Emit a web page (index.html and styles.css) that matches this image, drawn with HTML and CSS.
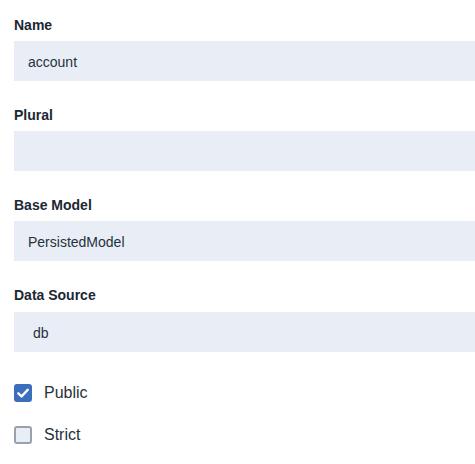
FILE: index.html
```html
<!DOCTYPE html>
<html>
<head>
<meta charset="utf-8">
<link rel="stylesheet" href="styles.css">
</head>
<body>
<form class="form">
  <div class="field">
    <label class="label">Name</label>
    <div class="input">account</div>
  </div>
  <div class="field">
    <label class="label">Plural</label>
    <div class="input"></div>
  </div>
  <div class="field">
    <label class="label">Base Model</label>
    <div class="input">PersistedModel</div>
  </div>
  <div class="field field-select">
    <label class="label">Data Source</label>
    <div class="input input-select">db</div>
  </div>
  <div class="checks">
    <div class="check">
      <span class="box box-on">
        <svg viewBox="0 0 18 18" width="18" height="18"><path d="M4.3 9.3 L7.6 12.4 L13.8 5.8" fill="none" stroke="#fff" stroke-width="2.4" stroke-linecap="round" stroke-linejoin="round"/></svg>
      </span>
      <span class="check-label">Public</span>
    </div>
    <div class="check">
      <span class="box"></span>
      <span class="check-label">Strict</span>
    </div>
  </div>
</form>
</body>
</html>
```
FILE: styles.css
```css
html, body {
  margin: 0;
  padding: 0;
  background: #ffffff;
}
body {
  font-family: "Liberation Sans", Arial, sans-serif;
  color: #1f2a36;
  overflow: hidden;
}
.form {
  padding: 15px 0 0 14px;
  width: 480px;
}
.field {
  display: flex;
  flex-direction: column;
  margin-bottom: 24px;
}
.field-select {
  margin-top: 1px;
  margin-bottom: 25px;
}
.field-select .label {
  margin-bottom: 7px;
}
.label {
  font-size: 14px;
  font-weight: bold;
  line-height: 20px;
  margin-bottom: 6px;
  color: #1c2733;
}
.input {
  height: 40px;
  box-sizing: border-box;
  background: #e9eef6;
  padding: 1px 14px 0;
  font-size: 14px;
  line-height: 40px;
  color: #27313c;
}
.input-select {
  padding-left: 19px;
}
.checks {
  display: flex;
  flex-direction: column;
  gap: 24px;
  padding-top: 7px;
}
.check {
  display: flex;
  align-items: center;
  gap: 12px;
  height: 18px;
}
.box {
  width: 18px;
  height: 18px;
  box-sizing: border-box;
  border: 2px solid #97a2ad;
  border-radius: 3px;
  background: #e9eef6;
  display: flex;
  align-items: center;
  justify-content: center;
}
.box-on {
  background: #3b6fbd;
  border: none;
}
.box svg {
  display: block;
}
.check-label {
  font-size: 16px;
  line-height: 20px;
  color: #27313c;
}
```
